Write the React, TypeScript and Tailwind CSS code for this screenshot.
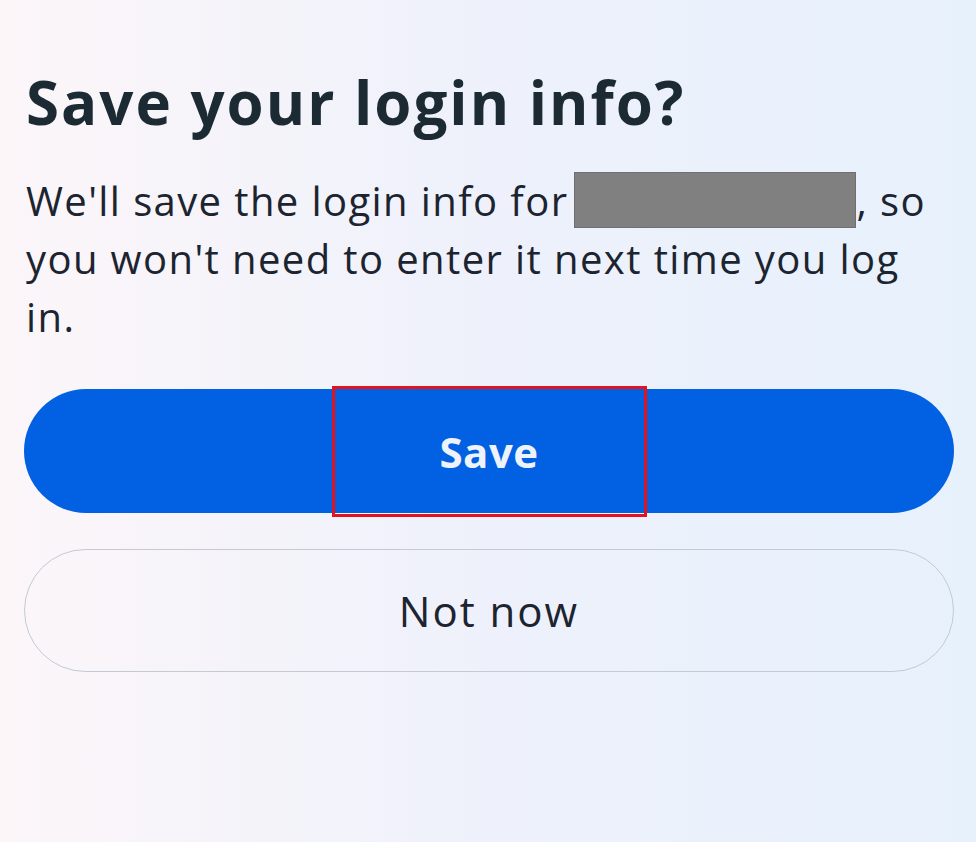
import React from "react";

const font = { fontFamily: '"Open Sans", "Noto Sans", sans-serif' };

export default function App() {
  return (
    <div
      className="min-h-[842px] w-[976px] bg-gradient-to-r from-[#fcf6f9] via-[#eef1fb] to-[#e7f1fc] pl-6 pr-[22px] pt-[66px] text-[#1c2b33]"
      style={font}
    >
      <h1 className="pl-[2px] text-[60px] font-bold leading-[72px] tracking-[2px]">
        Save your login info?
      </h1>

      <p className="mt-[34px] pl-[2px] text-[40px] leading-[58px] tracking-[1.4px] text-[#1c2430]">
        We'll save the login info for
        <span className="ml-[6px] inline-block h-[56px] w-[282px] border border-[#6f6f6f] bg-[#808080] align-[-12px]" />
        , so
        <br />
        you won't need to enter it next time you log
        <br />
        in.
      </p>

      <div className="mt-[43px] flex flex-col gap-9">
        <button className="flex h-[124px] w-[930px] items-center justify-center rounded-full bg-[#0260e2]">
          <span className="flex h-[131px] w-[315px] items-center justify-center border-[3px] border-[#e4121b] text-[42px] font-bold tracking-[0.5px] text-[#eef3fb]">
            Save
          </span>
        </button>
        <button className="flex h-[123px] w-[930px] items-center justify-center rounded-full border border-[#c3cad3] text-[42px] font-medium tracking-[2px] text-[#1c2430]">
          Not now
        </button>
      </div>
    </div>
  );
}
